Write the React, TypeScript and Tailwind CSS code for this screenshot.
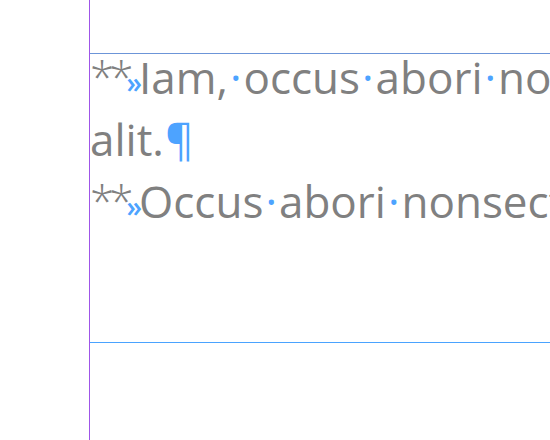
import React from "react";

const Dot = () => <span className="text-[#4da3ff] px-[2px]">·</span>;

const Tab = () => (
  <span className="relative top-[-1px] text-[28px] font-semibold leading-none text-[#4da3ff] ml-[-2px] mr-[-3px]">»</span>
);

export default function App() {
  return (
    <div className="w-[550px] h-[440px] overflow-hidden bg-white flex" style={{ fontFamily: '"Open Sans", sans-serif' }}>
      <div className="w-[89px] shrink-0" />
      <div className="w-px shrink-0 bg-[#9f55e8]" />
      <div className="flex-1 min-w-0 flex flex-col">
        <div className="h-[53px] shrink-0" />
        <div className="h-px shrink-0 bg-[#6c95d8]" />
        <div className="h-[288px] shrink-0 overflow-hidden">
          <div className="mt-[-8px] text-[44px] leading-[62px] text-[#808080] whitespace-nowrap">
            <div>
              <span className="tracking-[-5px] font-light">**</span>
              <Tab />
              Iam,<Dot />occus<Dot />abori<Dot />nonsecto
            </div>
            <div>
              alit.<span className="text-[#4da3ff] ml-[1px] tracking-[-3px]">¶</span>
            </div>
            <div>
              <span className="tracking-[-5px] font-light">**</span>
              <Tab />
              Occus<Dot />abori<Dot />nonsectem
            </div>
          </div>
        </div>
        <div className="h-px shrink-0 bg-[#4aa3ff]" />
      </div>
    </div>
  );
}
